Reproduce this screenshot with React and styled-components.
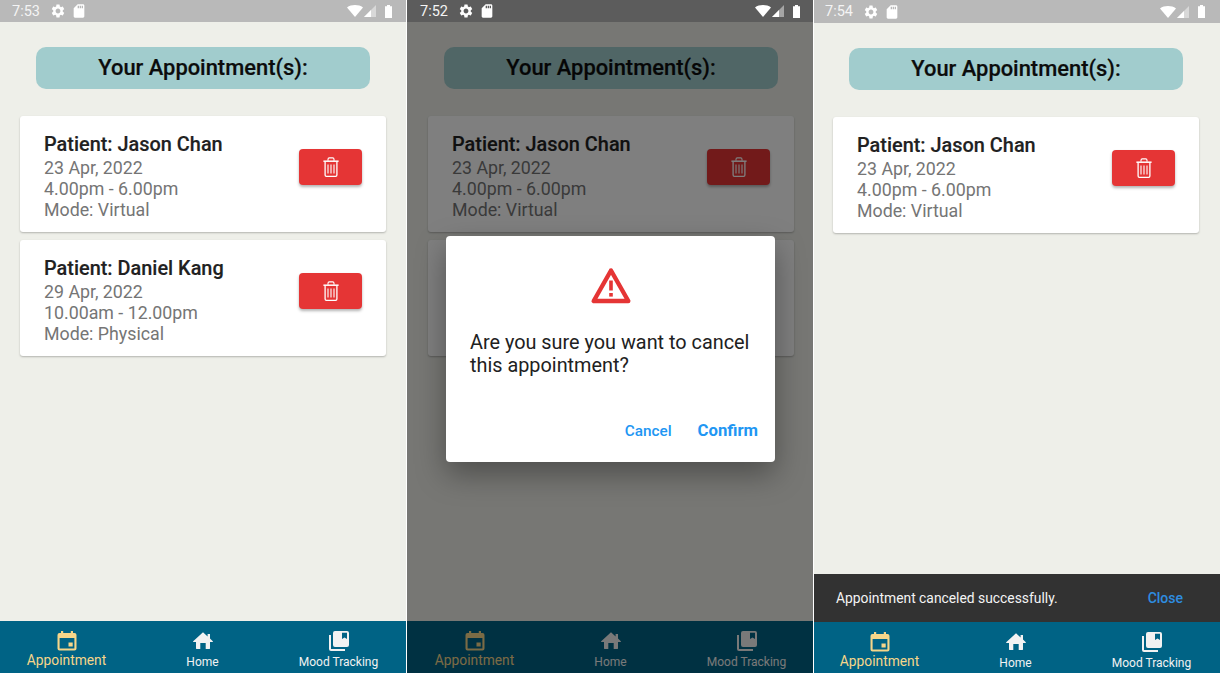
import React from "react";
import styled, { createGlobalStyle } from "styled-components";
import { MdSettings, MdSdCard } from "react-icons/md";

const Global = createGlobalStyle`
  html, body { margin: 0; padding: 0; background: #fff; }
  body { font-family: Roboto, "Liberation Sans", sans-serif; width: 1221px; height: 673px; overflow: hidden; }
  * { box-sizing: border-box; }
`;
const Row = styled.div`display: flex; width: 1221px; height: 673px; gap: 1px;`;
const Phone = styled.div`
  position: relative; width: 406px; height: 673px; flex: none;
  background: #eeefe9; display: flex; flex-direction: column; overflow: hidden;
`;
const Status = styled.div`
  position: relative; z-index: 1; height: ${p => p.$h}px; flex: none; background: ${p => p.$bg}; color: #fff;
  display: flex; align-items: center; padding: 0 ${p => 14 - p.$dx}px 0 ${p => 12 + p.$dx}px; font-size: 14.5px;
`;
const Time = styled.span`width: 37px; color: #f4f4f4;`;
const StatusIcons = styled.div`display: flex; align-items: center; gap: 5px; margin-left: 1px; font-size: 16px;`;
const Right = styled.div`margin-left: auto; display: flex; align-items: center; gap: 1px;`;
const Main = styled.div`flex: 1; display: flex; flex-direction: column; padding: 25px 0 0 ${p => 20 + p.$dx}px; min-height: 0;`;
const Header = styled.h1`
  margin: 0 0 27px 16px; width: 334px; height: 42px; padding-bottom: 2px; background: #a1cccd; border-radius: 10px; display: flex;
  align-items: center; justify-content: center; font-size: 21.9px; font-weight: 500; color: #0c0c0c;
  -webkit-text-stroke: 0.2px #0c0c0c;
`;
const Card = styled.div`
  width: 366px; height: 116px; margin-bottom: 8px; background: #fff; border-radius: 3px; padding: 17px 24px 0;
  display: flex; justify-content: space-between; box-shadow: 0 1px 2px rgba(0,0,0,.25);
`;
const Name = styled.div`font-size: 19.9px; font-weight: 500; line-height: 24px; color: #212121; -webkit-text-stroke: 0.15px #212121;`;
const Detail = styled.div`font-size: 17.8px; line-height: 21px; color: #757575;`;
const Trash = styled.button`
  width: 63px; height: 36px; margin-top: 16px; border: 0; border-radius: 4px; background: #e53535; color: #fff; padding: 0;
  display: flex; align-items: center; justify-content: center;
  box-shadow: 0 2px 3px rgba(0,0,0,.3);
`;
const Snack = styled.div`
  height: 48px; flex: none; background: #323232; display: flex; align-items: center; justify-content: space-between;
  padding: 0 37px 0 22px; font-size: 13.85px; color: #f4f4f4;
`;
const Close = styled.span`color: #2e8de0; font-weight: 500; font-size: 14px;`;
const Tab = styled.div`
  width: 136px; flex: none; display: flex; flex-direction: column; align-items: center; padding-top: 8px;
  color: ${p => p.$active ? "#f6d68a" : "#f2f2f2"}; font-size: ${p => p.$active ? 13.8 : 12}px; line-height: 14px;
`;
const Nav = styled.nav`
  height: ${p => p.$h}px; flex: none; background: #006385; display: flex;
  ${Tab}:first-child { margin-left: ${p => p.$dx - 1.5}px; }
`;
const TabIcon = styled.div`height: 24px; display: flex; align-items: center; justify-content: center; margin-bottom: ${p => p.$active ? 0 : 2}px;`;
const Scrim = styled.div`position: absolute; inset: 0; background: rgba(0,0,0,.5);`;
const Dialog = styled.div`
  position: absolute; z-index: 2; left: 39px; top: 236px; width: 329px; height: 226px; background: #fff; border-radius: 4px;
  box-shadow: 0 12px 30px rgba(0,0,0,.35); padding: 26px 24px 0; display: flex; flex-direction: column;
`;
const Alert = styled.div`height: 48px; display: flex; justify-content: center;`;
const Message = styled.p`margin: 21px 0 0; font-size: 19.85px; line-height: 23px; color: #212121;`;
const Actions = styled.div`margin: auto -7px 21px 0; display: flex; justify-content: flex-end; align-items: center; gap: 26px; color: #2196f3; line-height: 20px;`;
const Action = styled.span`font-weight: ${p => p.$strong ? 700 : 500}; font-size: ${p => p.$strong ? 16.7 : 15.3}px;`;

const Wifi = () => <svg width="16" height="12" viewBox="0 0 16 12"><path d="M0 2.5C4.3 -.7 11.7 -.7 16 2.5L8 12Z" fill="#fff"/></svg>;
const Signal = () => <svg width="12" height="12" viewBox="0 0 12 12"><path d="M12 0V12H0Z" fill="#fff" fillOpacity=".45"/><path d="M7 5V12H0Z" fill="#fff"/></svg>;
const Battery = () => <svg width="7" height="13" viewBox="0 0 7 13" style={{ marginLeft: 8 }}><path d="M2 0h3v1.2h2V13H0V1.2h2Z" fill="#fff"/></svg>;
const TrashIcon = () => (
  <svg width="16" height="20" viewBox="0 0 16 20" fill="none" stroke="#fff">
    <path d="M5 3.7V2.2A1.3 1.3 0 0 1 6.3.9h3.4A1.3 1.3 0 0 1 11 2.2v1.5" strokeWidth="1.1"/>
    <path d="M.4 4.2h15.2" strokeWidth="1.5"/>
    <path d="M2.1 4.5V18a1.3 1.3 0 0 0 1.3 1.3h9.2a1.3 1.3 0 0 0 1.3-1.3V4.5" strokeWidth="1.3"/>
    <path d="M5 7.5v9M8 7.5v9M11 7.5v9" strokeWidth="1.1"/>
  </svg>
);
const CalendarIcon = () => (
  <svg width="24" height="24" viewBox="0 0 24 24" fill="currentColor">
    <path fillRule="evenodd" d="M6 2h2.2v2h7.6V2H18v2h1.5a2 2 0 0 1 2 2v13.5a2 2 0 0 1-2 2h-15a2 2 0 0 1-2-2V6a2 2 0 0 1 2-2H6ZM4.6 9v10.4h14.8V9Z"/>
    <rect x="13.5" y="13.5" width="4.2" height="4"/>
  </svg>
);
const HomeIcon = () => (
  <svg width="24" height="24" viewBox="0 0 24 24" fill="currentColor">
    <path d="M12 3.2 2.2 12.2c-.3.3-.1.8.3.8H5v6.2c0 .5.4.9.9.9h3.4v-6h5.4v6h3.4c.5 0 .9-.4.9-.9V13h2.5c.4 0 .6-.5.3-.8L19 9.6V5h-2.4v2.4Z"/>
  </svg>
);
const MoodIcon = () => (
  <svg width="24" height="24" viewBox="0 0 24 24" fill="currentColor">
    <path d="M2 6v14a2 2 0 0 0 2 2h14v-2H4V6Z"/>
    <path fillRule="evenodd" d="M8 2h12a2 2 0 0 1 2 2v12a2 2 0 0 1-2 2H8a2 2 0 0 1-2-2V4a2 2 0 0 1 2-2Zm7 1.8V10l2.5-1.6L20 10V3.8Z"/>
  </svg>
);
const AlertIcon = () => (
  <svg width="48" height="48" viewBox="0 0 48 48" fill="none">
    <path d="M24 8.5 6.7 39h34.6Z" stroke="#e53535" strokeWidth="4.4" strokeLinejoin="round"/>
    <rect x="22.2" y="18.5" width="3.6" height="10" fill="#e53535"/>
    <rect x="22.2" y="31" width="3.6" height="3.6" fill="#e53535"/>
  </svg>
);

const appointments = [
  { name: "Jason Chan", date: "23 Apr, 2022", time: "4.00pm - 6.00pm", mode: "Virtual" },
  { name: "Daniel Kang", date: "29 Apr, 2022", time: "10.00am - 12.00pm", mode: "Physical" },
];

function Screen({ dx, time, items, children, snack, dim, tall }) {
  return (
    <Phone>
      <Status $dx={dx} $h={tall ? 23 : 22} $bg={dim ? "#5c5c5c" : "#b9b9b9"}>
        <Time>{time}</Time>
        <StatusIcons><MdSettings /><MdSdCard /></StatusIcons>
        <Right><Wifi /><Signal /><Battery /></Right>
      </Status>
      <Main $dx={dx}>
        <Header>Your Appointment(s):</Header>
        {items.map(a => (
          <Card key={a.name}>
            <div>
              <Name>Patient: {a.name}</Name>
              <Detail>{a.date}</Detail>
              <Detail>{a.time}</Detail>
              <Detail>Mode: {a.mode}</Detail>
            </div>
            <Trash aria-label="Delete"><TrashIcon /></Trash>
          </Card>
        ))}
      </Main>
      {snack && <Snack>{snack}<Close>Close</Close></Snack>}
      <Nav $dx={dx} $h={tall ? 51 : 52}>
        <Tab $active><TabIcon $active><CalendarIcon /></TabIcon>Appointment</Tab>
        <Tab><TabIcon><HomeIcon /></TabIcon>Home</Tab>
        <Tab><TabIcon><MoodIcon /></TabIcon>Mood Tracking</Tab>
      </Nav>
      {children}
    </Phone>
  );
}

export default function App() {
  return (
    <>
      <Global />
      <Row>
        <Screen dx={0} time="7:53" items={appointments} />
        <Screen dx={1} time="7:52" items={appointments} dim>
          <Scrim />
          <Dialog>
            <Alert><AlertIcon /></Alert>
            <Message>Are you sure you want to cancel this appointment?</Message>
            <Actions><Action>Cancel</Action><Action $strong>Confirm</Action></Actions>
          </Dialog>
        </Screen>
        <Screen dx={-1} tall time="7:54" items={appointments.slice(0, 1)} snack="Appointment canceled successfully." />
      </Row>
    </>
  );
}
